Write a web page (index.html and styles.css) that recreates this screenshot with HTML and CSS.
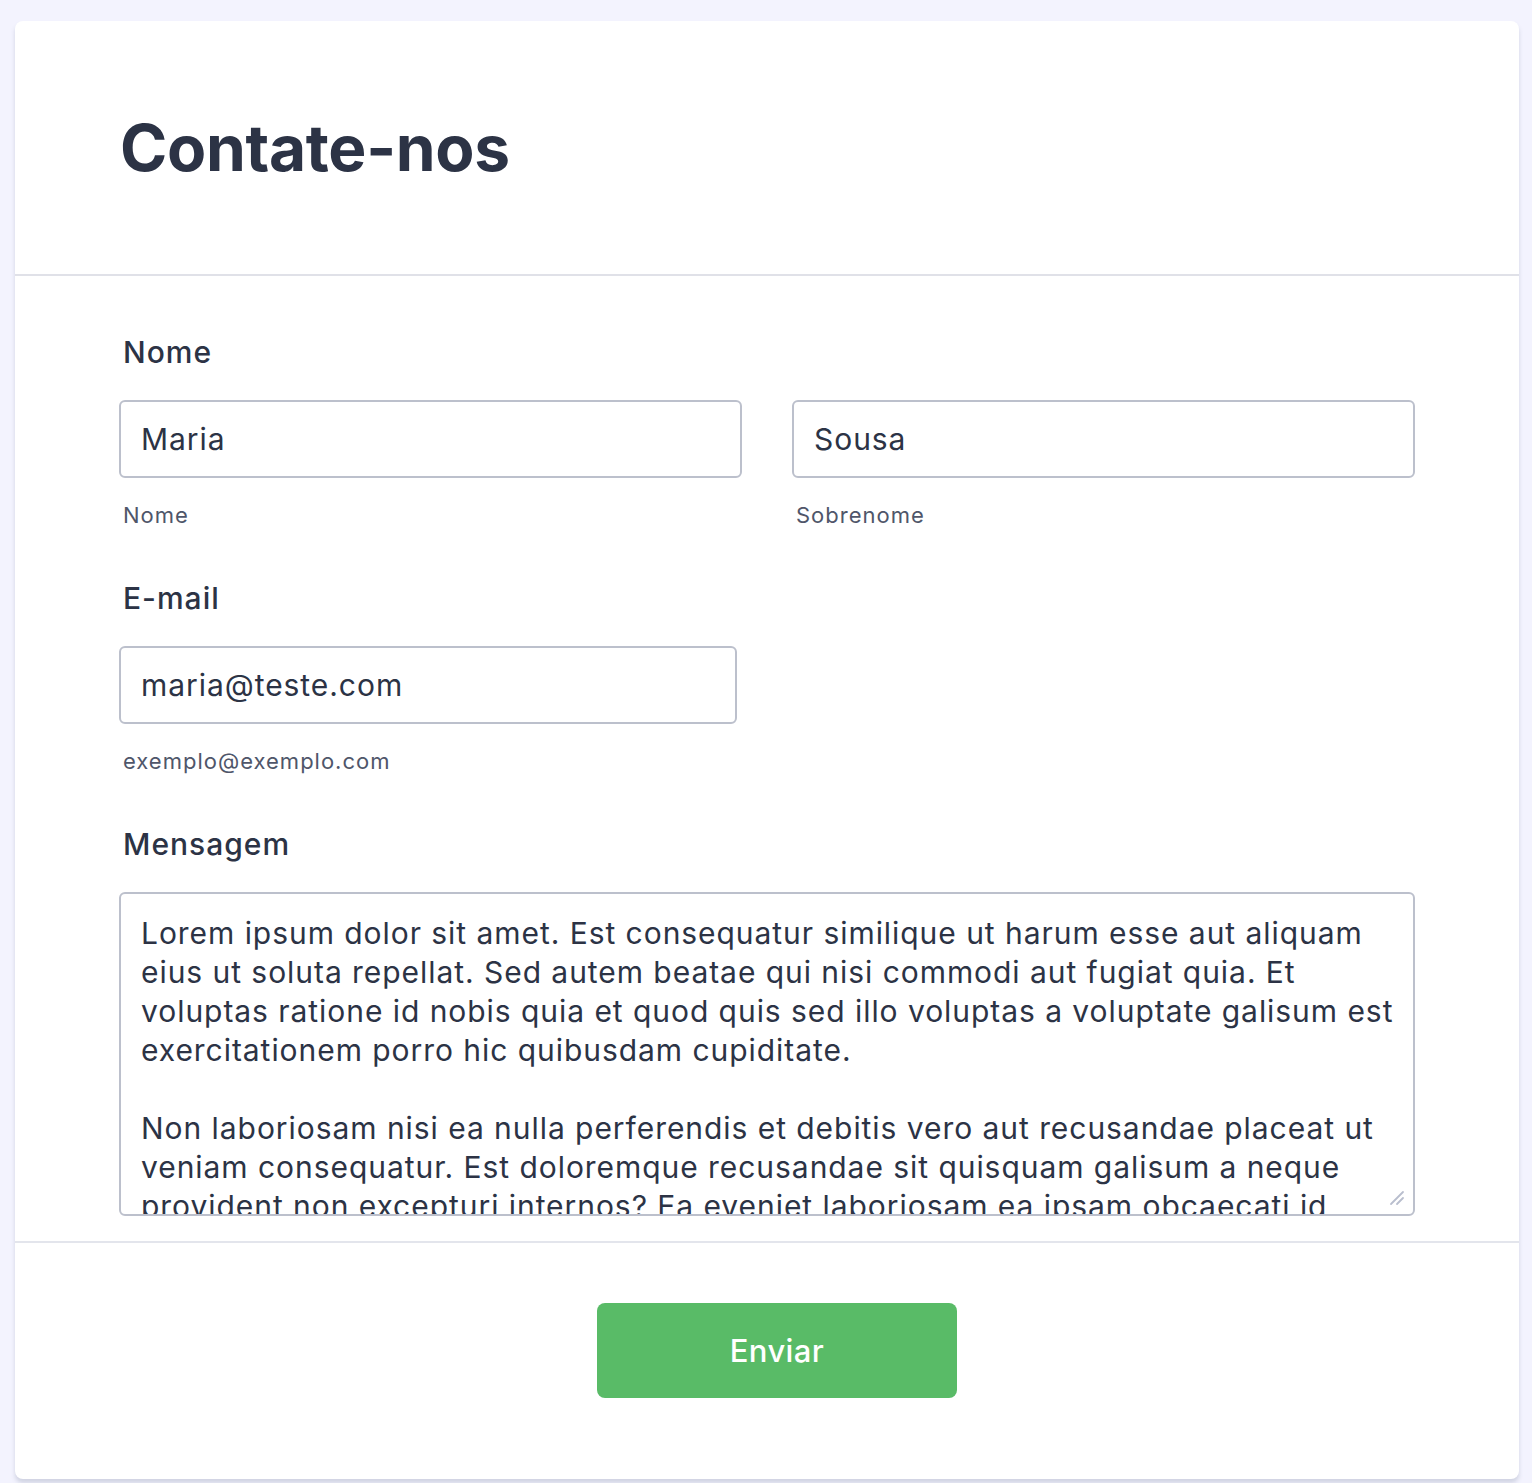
FILE: index.html
```html
<!DOCTYPE html>
<html lang="pt">
<head>
  <meta charset="UTF-8" />
  <meta name="viewport" content="width=device-width, initial-scale=1.0"/>
  <title>Contate-nos</title>
  <link rel="stylesheet" href="styles.css">
</head>
<body>
  <form class="form-card" onsubmit="return false">
    <div class="form-header">
      <h1>Contate-nos</h1>
    </div>

    <div class="form-body">
      <div class="field">
        <label class="field-label">Nome</label>
        <div class="name-row">
          <div class="sub-field">
            <input type="text" value="Maria">
            <span class="sub-label">Nome</span>
          </div>
          <div class="sub-field">
            <input type="text" value="Sousa">
            <span class="sub-label">Sobrenome</span>
          </div>
        </div>
      </div>

      <div class="field">
        <label class="field-label">E-mail</label>
        <div class="sub-field email">
          <input type="email" value="maria@teste.com">
          <span class="sub-label">exemplo@exemplo.com</span>
        </div>
      </div>

      <div class="field">
        <label class="field-label">Mensagem</label>
        <div class="textarea-wrap">
          <textarea rows="8">Lorem ipsum dolor sit amet. Est consequatur similique ut harum esse aut aliquam eius ut soluta repellat. Sed autem beatae qui nisi commodi aut fugiat quia. Et voluptas ratione id nobis quia et quod quis sed illo voluptas a voluptate galisum est exercitationem porro hic quibusdam cupiditate.

Non laboriosam nisi ea nulla perferendis et debitis vero aut recusandae placeat ut veniam consequatur. Est doloremque recusandae sit quisquam galisum a neque provident non excepturi internos? Ea eveniet laboriosam ea ipsam obcaecati id voluptatem dolorum et quia fugit.</textarea>
          <svg class="resize-grip" width="16" height="16" viewBox="0 0 16 16">
            <path d="M2 14 L14 2 M8 14 L14 8" stroke="#b9bece" stroke-width="1.8" stroke-linecap="round"/>
          </svg>
        </div>
      </div>
    </div>

    <div class="form-footer">
      <button type="submit">Enviar</button>
    </div>
  </form>
</body>
</html>
```

FILE: styles.css
```css
* {
  box-sizing: border-box;
  margin: 0;
  padding: 0;
}

body {
  font-family: 'Inter', 'Noto Sans', sans-serif;
  background: #f3f3fe;
  color: #2c3345;
  padding: 21px 13px 4px 15px;
}

.form-card {
  background: #fff;
  border-radius: 8px;
  box-shadow: 0 4px 4px rgba(87, 100, 126, 0.21);
}

.form-header {
  padding: 88px 105px 88px;
  border-bottom: 2px solid #e0e1e8;
}

.form-header h1 {
  font-size: 64px;
  font-weight: 700;
  line-height: 77px;
  letter-spacing: -0.3px;
}

.form-body {
  padding: 58px 104px 25px;
  display: flex;
  flex-direction: column;
  gap: 52px;
}

.field-label {
  display: block;
  font-size: 30px;
  font-weight: 500;
  line-height: 36px;
  letter-spacing: 1px;
  margin-bottom: 30px;
  padding-left: 4px;
}

.name-row {
  display: flex;
  gap: 50px;
}

.name-row .sub-field {
  flex: 1;
}

.sub-field {
  display: flex;
  flex-direction: column;
}

.sub-field.email {
  width: 618px;
}

input,
textarea {
  font-family: inherit;
  color: #2c3345;
  border: 2px solid #bcc0cc;
  border-radius: 6px;
  background: #fff;
  outline: none;
  letter-spacing: 0.95px;
}

input {
  height: 78px;
  font-size: 30px;
  padding: 0 20px;
}

.textarea-wrap {
  position: relative;
}

textarea {
  display: block;
  width: 100%;
  height: 324px;
  font-size: 30px;
  line-height: 39px;
  padding: 20px 8px 18px 20px;
  overflow: hidden;
  resize: none;
}

.resize-grip {
  position: absolute;
  right: 10px;
  bottom: 10px;
}

.sub-label {
  font-size: 22px;
  line-height: 26px;
  letter-spacing: 1px;
  color: #4f566a;
  margin-top: 24px;
  padding-left: 4px;
}

.form-footer {
  border-top: 2px solid #e3e5ec;
  padding: 60px 0 81px 20px;
  display: flex;
  justify-content: center;
}

button {
  width: 360px;
  height: 95px;
  background: #59bb67;
  border: none;
  border-radius: 8px;
  color: #fff;
  font-family: inherit;
  font-size: 31px;
  font-weight: 500;
  letter-spacing: 0.4px;
  cursor: pointer;
}
```
